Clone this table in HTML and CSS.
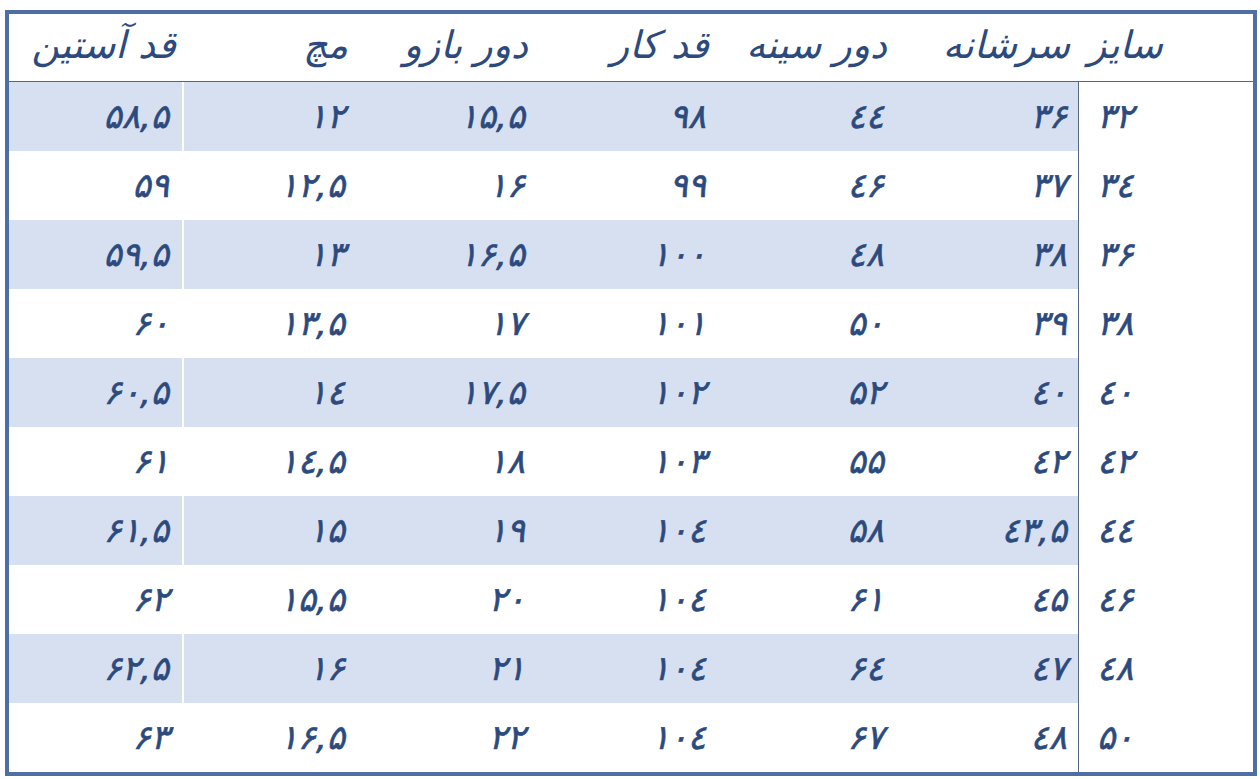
FILE: index.html
```html
<!DOCTYPE html>
<html lang="fa" dir="rtl">
<head>
<meta charset="utf-8">
<title>جدول سایز</title>
<link rel="stylesheet" href="styles.css">
</head>
<body>
<table class="sizes">
  <colgroup>
    <col class="c-size"><col class="c-shoulder"><col class="c-chest"><col class="c-length"><col class="c-arm"><col class="c-wrist"><col class="c-sleeve">
  </colgroup>
  <thead>
    <tr>
      <th class="size">سایز</th>
      <th>سرشانه</th>
      <th>دور سینه</th>
      <th>قد کار</th>
      <th>دور بازو</th>
      <th>مچ</th>
      <th class="last">قد آستین</th>
    </tr>
  </thead>
  <tbody>
    <tr class="shade"><td class="size"><span class="num">۳۲</span></td><td><span class="num">۳۶</span></td><td><span class="num">٤٤</span></td><td><span class="num">۹۸</span></td><td><span class="num">۱۵,۵</span></td><td><span class="num">۱۲</span></td><td class="last"><span class="num">۵۸,۵</span></td></tr>
    <tr><td class="size"><span class="num">۳٤</span></td><td><span class="num">۳۷</span></td><td><span class="num">٤۶</span></td><td><span class="num">۹۹</span></td><td><span class="num">۱۶</span></td><td><span class="num">۱۲,۵</span></td><td class="last"><span class="num">۵۹</span></td></tr>
    <tr class="shade"><td class="size"><span class="num">۳۶</span></td><td><span class="num">۳۸</span></td><td><span class="num">٤۸</span></td><td><span class="num">۱۰۰</span></td><td><span class="num">۱۶,۵</span></td><td><span class="num">۱۳</span></td><td class="last"><span class="num">۵۹,۵</span></td></tr>
    <tr><td class="size"><span class="num">۳۸</span></td><td><span class="num">۳۹</span></td><td><span class="num">۵۰</span></td><td><span class="num">۱۰۱</span></td><td><span class="num">۱۷</span></td><td><span class="num">۱۳,۵</span></td><td class="last"><span class="num">۶۰</span></td></tr>
    <tr class="shade"><td class="size"><span class="num">٤۰</span></td><td><span class="num">٤۰</span></td><td><span class="num">۵۲</span></td><td><span class="num">۱۰۲</span></td><td><span class="num">۱۷,۵</span></td><td><span class="num">۱٤</span></td><td class="last"><span class="num">۶۰,۵</span></td></tr>
    <tr><td class="size"><span class="num">٤۲</span></td><td><span class="num">٤۲</span></td><td><span class="num">۵۵</span></td><td><span class="num">۱۰۳</span></td><td><span class="num">۱۸</span></td><td><span class="num">۱٤,۵</span></td><td class="last"><span class="num">۶۱</span></td></tr>
    <tr class="shade"><td class="size"><span class="num">٤٤</span></td><td><span class="num">٤۳,۵</span></td><td><span class="num">۵۸</span></td><td><span class="num">۱۰٤</span></td><td><span class="num">۱۹</span></td><td><span class="num">۱۵</span></td><td class="last"><span class="num">۶۱,۵</span></td></tr>
    <tr><td class="size"><span class="num">٤۶</span></td><td><span class="num">٤۵</span></td><td><span class="num">۶۱</span></td><td><span class="num">۱۰٤</span></td><td><span class="num">۲۰</span></td><td><span class="num">۱۵,۵</span></td><td class="last"><span class="num">۶۲</span></td></tr>
    <tr class="shade"><td class="size"><span class="num">٤۸</span></td><td><span class="num">٤۷</span></td><td><span class="num">۶٤</span></td><td><span class="num">۱۰٤</span></td><td><span class="num">۲۱</span></td><td><span class="num">۱۶</span></td><td class="last"><span class="num">۶۲,۵</span></td></tr>
    <tr><td class="size"><span class="num">۵۰</span></td><td><span class="num">٤۸</span></td><td><span class="num">۶۷</span></td><td><span class="num">۱۰٤</span></td><td><span class="num">۲۲</span></td><td><span class="num">۱۶,۵</span></td><td class="last"><span class="num">۶۳</span></td></tr>
  </tbody>
</table>
</body>
</html>
```
FILE: styles.css
```css
html, body {
  margin: 0;
  padding: 0;
  background: #ffffff;
}
body {
  padding: 10px 3px 3px 5px;
  font-family: "DejaVu Sans", sans-serif;
  color: #2c4a7e;
}
.sizes {
  width: 1252px;
  height: 766px;
  border: 4px solid #4d6fa3;
  border-collapse: separate;
  border-spacing: 0;
  table-layout: fixed;
  direction: rtl;
}
.c-size { width: 175px; }
.c-shoulder { width: 183px; }
.c-chest { width: 178px; }
.c-length { width: 181px; }
.c-arm { width: 180px; }
.c-wrist { width: 172px; }
.c-sleeve { width: 175px; }

.sizes thead th {
  height: 61px;
  padding: 0 8px 6px 0;
  font-weight: normal;
  font-style: italic;
  font-size: 38px;
  line-height: 1;
  text-align: right;
  vertical-align: middle;
  border-bottom: 1px solid #56667e;
  white-space: nowrap;
}
.sizes thead th.size {
  text-align: left;
  padding: 0 0 6px 10px;
}
.sizes tbody td {
  height: 67px;
  padding: 0 11px 2px 0;
  font-size: 34px;
  line-height: 1;
  font-style: italic;
  text-align: right;
  vertical-align: middle;
}
.sizes tbody td.size {
  text-align: left;
  padding: 0 0 2px 18px;
  border-left: 1px solid #56667e;
  background: #ffffff;
}
.sizes tbody tr.shade td {
  background: #d7e0f0;
}
.sizes tbody tr.shade td.size {
  background: #ffffff;
}
.sizes tbody td.last {
  border-right: 2px solid #ffffff;
  padding-right: 13px;
}
.num {
  unicode-bidi: bidi-override;
  direction: ltr;
  -webkit-text-stroke: 0.6px #2c4a7e;
}
```
